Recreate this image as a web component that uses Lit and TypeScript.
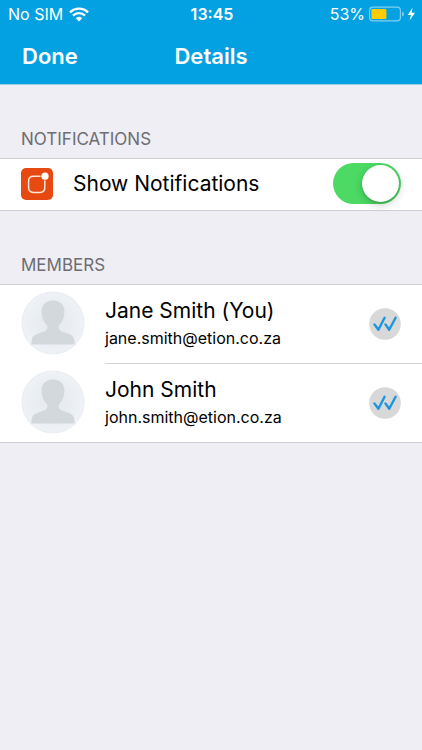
import { LitElement, html, css } from "lit";
import { customElement, property, state } from "lit/decorators.js";

interface Member {
  name: string;
  email: string;
}

@customElement("status-bar")
class StatusBar extends LitElement {
  static styles = css`
    :host {
      display: grid;
      grid-template-columns: 1fr auto 1fr;
      align-items: center;
      height: 28px;
      padding: 0 6px 0 8px;
      font-size: 16px;
      line-height: 20px;
    }
    .side {
      display: flex;
      align-items: center;
      gap: 6px;
    }
    .end {
      justify-content: flex-end;
      gap: 4px;
    }
    .time {
      font-weight: 600;
    }
    svg {
      display: block;
    }
  `;

  render() {
    return html`
      <div class="side">
        <span>No SIM</span>
        <svg width="20" height="15" viewBox="0 0 20 15" fill="none" stroke="#fff" stroke-width="2.4">
          <path d="M1 5.4 C6 0.4 14 0.4 19 5.4" />
          <path d="M4 8.6 C7.4 5.3 12.6 5.3 16 8.6" />
          <path d="M6.8 11.2 Q10 8.4 13.2 11.2 L10 14.4 Z" fill="#fff" stroke="none" />
        </svg>
      </div>
      <span class="time">13:45</span>
      <div class="side end">
        <span>53%</span>
        <svg width="47" height="16" viewBox="0 0 47 16">
          <rect x="0.6" y="1.1" width="30.8" height="13.8" rx="3.4" fill="none" stroke="#7fd0f0" stroke-width="1.2" />
          <rect x="2.4" y="3" width="15" height="10" rx="1" fill="#ffcc00" />
          <path d="M33 5.4 Q35 6.4 35 8 Q35 9.6 33 10.6 Z" fill="#7fd0f0" />
          <path d="M43.6 1.6 L38.8 9 H42 L40.6 14.6 L46 6.8 H42.6 Z" fill="#fff" />
        </svg>
      </div>
    `;
  }
}

@customElement("member-row")
class MemberRow extends LitElement {
  @property({ attribute: false }) member: Member = { name: "", email: "" };

  static styles = css`
    :host {
      display: flex;
      align-items: flex-start;
      gap: 20px;
      padding-left: 21px;
      background: #fff;
    }
    .avatar {
      flex: none;
      width: 64px;
      height: 64px;
      margin-top: 6px;
    }
    .body {
      flex: 1;
      min-width: 0;
      display: flex;
      align-items: center;
      gap: 12px;
      height: 78px;
      padding-right: 21px;
      border-bottom: var(--divider, 1px solid #d3d2d6);
    }
    .text {
      flex: 1;
      min-width: 0;
    }
    .name {
      font-size: 21px;
      line-height: 28px;
    }
    .email {
      font-size: 16px;
      line-height: 26px;
    }
    .badge {
      flex: none;
      width: 32px;
      height: 32px;
    }
  `;

  render() {
    return html`
      <svg class="avatar" viewBox="0 0 64 64" aria-hidden="true">
        <defs>
          <radialGradient id="disc">
            <stop offset="0.4" stop-color="#e8ebef" />
            <stop offset="0.92" stop-color="#eef1f5" />
            <stop offset="1" stop-color="#eaedf1" />
          </radialGradient>
        </defs>
        <circle cx="32" cy="32" r="31.6" fill="url(#disc)" />
        <path
          fill="#d3d8dc"
          d="M32 9.4 C39 9.4 43.4 13.6 43.4 20.6 C43.4 26.6 41.4 31.2 37.8 34.4 C37.2 38 38.4 39.6 41.6 40.8 C47 42.8 51 43.4 52.6 46.8 C53.6 48.8 53.6 51 53.6 53.4 H10.4 C10.4 51 10.4 48.8 11.4 46.8 C13 43.4 17 42.8 22.4 40.8 C25.6 39.6 26.8 38 26.2 34.4 C22.6 31.2 20.6 26.6 20.6 20.6 C20.6 13.6 25 9.4 32 9.4 Z"
        />
      </svg>
      <div class="body">
        <div class="text">
          <div class="name">${this.member.name}</div>
          <div class="email">${this.member.email}</div>
        </div>
        <svg class="badge" viewBox="0 0 32 32" role="img" aria-label="Read">
          <circle cx="16" cy="16" r="15.8" fill="#d8d8d8" />
          <path
            d="M5.4 16.4 L9.4 21.8 L15.6 9.8 M16.4 16.4 L20.2 21.8 L26.6 9.8"
            fill="none"
            stroke="#1c96dc"
            stroke-width="2.4"
            stroke-linecap="round"
            stroke-linejoin="round"
          />
        </svg>
      </div>
    `;
  }
}

@customElement("app-root")
class AppRoot extends LitElement {
  @state() private notify = true;

  private members: Member[] = [
    { name: "Jane Smith (You)", email: "jane.smith@etion.co.za" },
    { name: "John Smith", email: "john.smith@etion.co.za" },
  ];

  static styles = css`
    :host {
      display: block;
      min-height: 100vh;
      background: #efeef4;
      color: #000;
      font-family: Inter, "Liberation Sans", sans-serif;
    }
    header {
      background: #04a1e2;
      color: #fff;
      border-bottom: 1px solid #9fcfe6;
    }
    nav {
      display: grid;
      grid-template-columns: 1fr auto 1fr;
      align-items: center;
      height: 56px;
      padding: 0 22px;
    }
    .done,
    h1 {
      margin: 0;
      font: inherit;
      font-size: 22px;
      line-height: 28px;
      font-weight: 600;
    }
    .done {
      justify-self: start;
      padding: 0;
      border: 0;
      background: none;
      color: inherit;
    }
    h2 {
      margin: 0;
      padding: 43px 21px 8px;
      font-size: 17px;
      line-height: 22px;
      font-weight: 400;
      color: #6d6d72;
    }
    .group {
      border: solid #d0cfd4;
      border-width: 1px 0;
      background: #fff;
    }
    .setting {
      display: flex;
      align-items: center;
      gap: 20px;
      height: 49px;
      padding: 0 21px 2px;
      font-size: 21px;
      line-height: 28px;
    }
    .setting span {
      flex: 1;
    }
    .icon {
      flex: none;
      width: 32px;
      height: 32px;
    }
    .switch {
      appearance: none;
      flex: none;
      display: flex;
      justify-content: flex-start;
      box-sizing: border-box;
      width: 68px;
      height: 41px;
      margin: 0;
      padding: 2px;
      border-radius: 21px;
      background: #e5e5ea;
    }
    .switch:checked {
      justify-content: flex-end;
      background: #4cd964;
    }
    .switch::before {
      content: "";
      width: 37px;
      height: 37px;
      border-radius: 50%;
      background: #fff;
      box-shadow: 0 3px 8px rgba(0, 0, 0, 0.2), 0 1px 2px rgba(0, 0, 0, 0.16);
    }
    member-row:last-child {
      --divider: none;
    }
  `;

  private toggle(e: Event) {
    this.notify = (e.target as HTMLInputElement).checked;
  }

  render() {
    return html`
      <header>
        <status-bar></status-bar>
        <nav>
          <button class="done" type="button">Done</button>
          <h1>Details</h1>
        </nav>
      </header>
      <main>
        <h2>NOTIFICATIONS</h2>
        <label class="group setting">
          <svg class="icon" viewBox="0 0 32 32" aria-hidden="true">
            <rect width="32" height="32" rx="5" fill="#e64a10" />
            <path
              d="M19 8.2 H12.4 Q7.6 8.2 7.6 13 V19.6 Q7.6 24.4 12.4 24.4 H19 Q23.8 24.4 23.8 19.6 V13"
              fill="none"
              stroke="#ffe4d8"
              stroke-width="1.5"
              stroke-linecap="round"
            />
            <circle cx="24" cy="8.2" r="3.6" fill="#fff" />
          </svg>
          <span>Show Notifications</span>
          <input class="switch" type="checkbox" role="switch" .checked=${this.notify} @change=${this.toggle} />
        </label>
        <h2>MEMBERS</h2>
        <div class="group">
          ${this.members.map((m) => html`<member-row .member=${m}></member-row>`)}
        </div>
      </main>
    `;
  }
}
